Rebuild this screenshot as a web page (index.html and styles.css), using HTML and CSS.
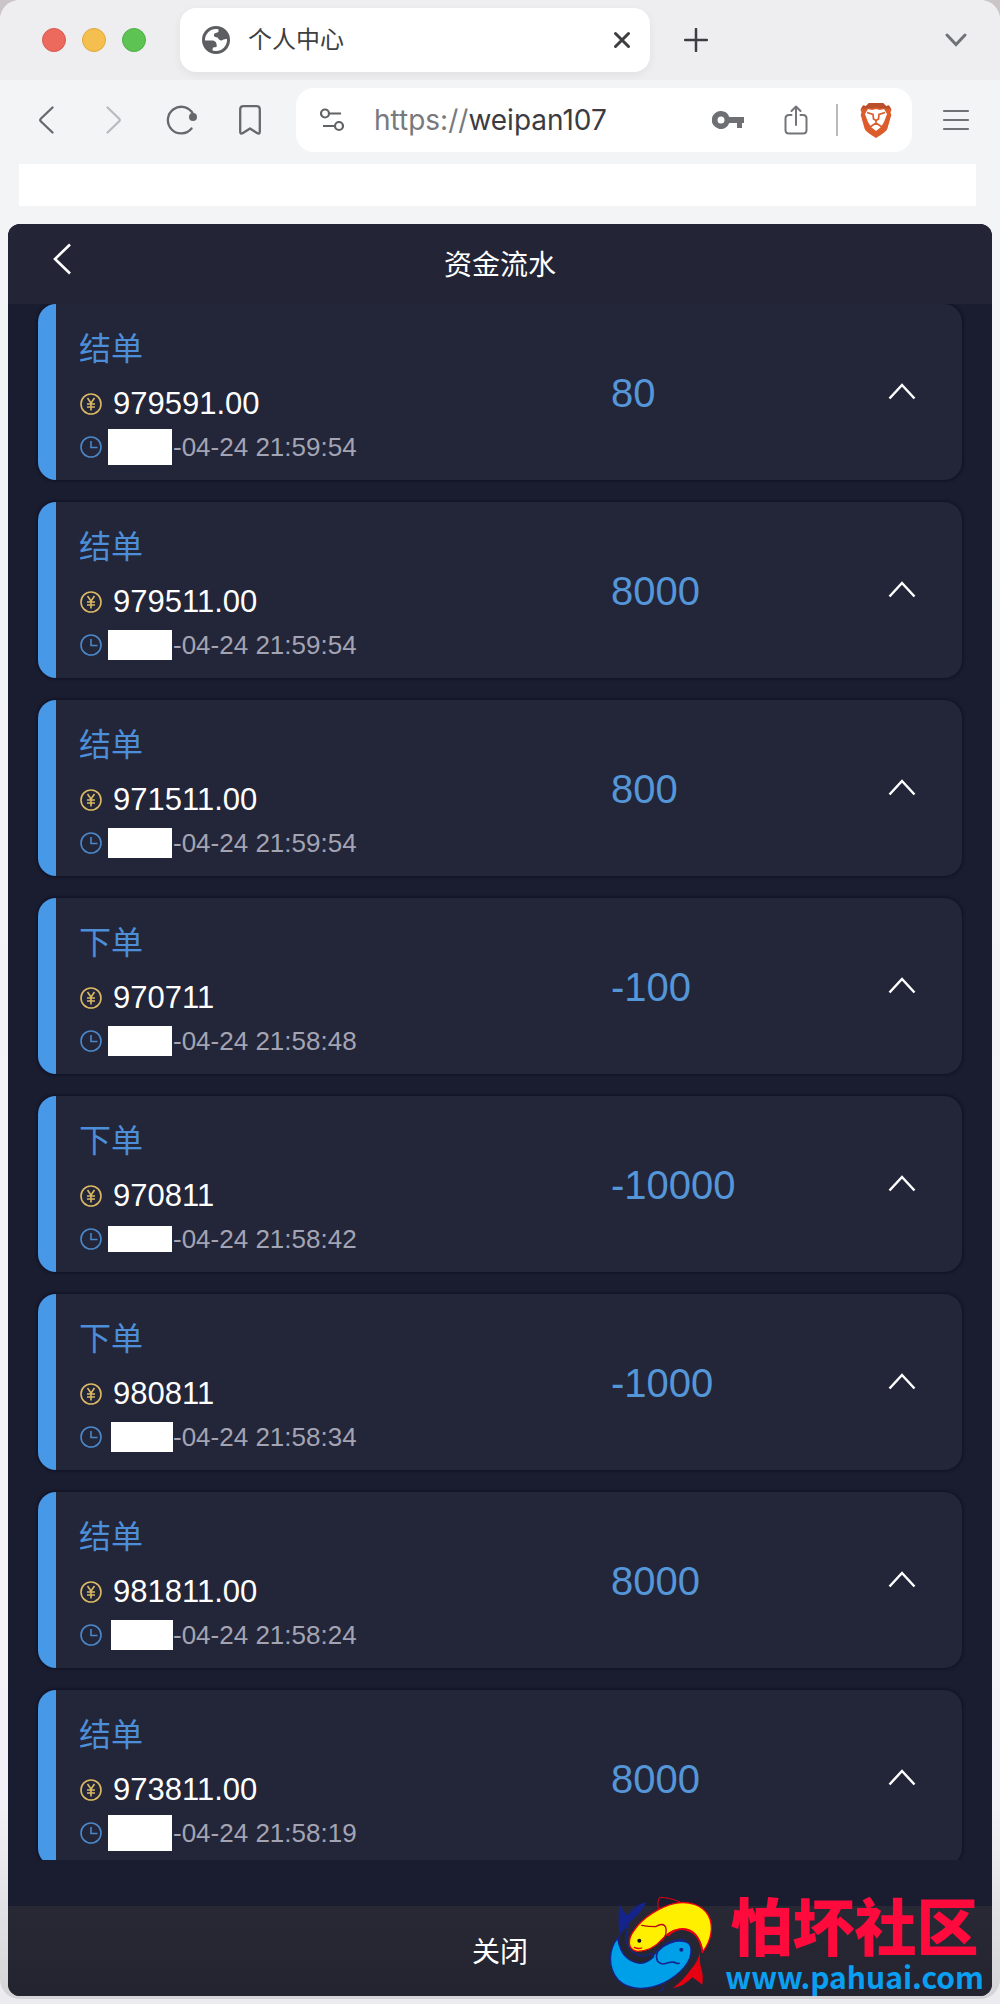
FILE: index.html
```html
<!DOCTYPE html>
<html lang="zh-CN">
<head>
<meta charset="utf-8">
<meta name="viewport" content="width=device-width, initial-scale=1">
<title>个人中心</title>
<link rel="stylesheet" href="styles.css">
</head>
<body>
<svg class="defs" aria-hidden="true">
  <symbol id="coin" viewBox="0 0 22 22"><circle cx="11" cy="11" r="10"/><path d="M7.500 5 11 10l3.500-5M7 11h8M7 14h8M11 10v7.500"/></symbol>
  <symbol id="clock" viewBox="0 0 22 22"><circle cx="11" cy="11" r="10"/><path d="M11 5v6.500h6.500"/></symbol>
  <symbol id="up" viewBox="0 0 28 18"><path d="M1.500 16.500 14 3l12.500 13.500"/></symbol>
</svg>
<div class="window">
  <header class="tabs">
    <div class="lights"><i class="light red"></i><i class="light amber"></i><i class="light green"></i></div>
    <div class="tab">
      <svg width="28" height="28" viewBox="0 0 28 28"><circle cx="14" cy="14" r="12.500" fill="#fff" stroke="#5d5e61" stroke-width="3"/><path fill="#5d5e61" d="M17 2.500q-1 1-.5 3.500l-4 1.500q-1.500 2 .5 3.500 3-.5 4 2.500 2 2 4.500 0l5-1V9l-4-5.500zM2 14.500h9q3 .5 3.500 3.500.5 1.500 0 3l-3.500.5-1 4.500-6-3z"/></svg>
      <span class="tab-title">个人中心</span>
      <button class="icon" aria-label="关闭标签页"><svg width="18" height="18" viewBox="0 0 18 18" fill="none" stroke="#3d3e41" stroke-width="3" stroke-linecap="round"><path d="m2.500 2.500 13 13M15.500 2.500l-13 13"/></svg></button>
    </div>
    <button class="icon new-tab" aria-label="新标签页"><svg width="24" height="24" viewBox="0 0 24 24" fill="none" stroke="#3d3e41" stroke-width="2.500" stroke-linecap="round"><path d="M12 1v22M1 12h22"/></svg></button>
    <button class="icon tab-menu" aria-label="标签页列表"><svg width="22" height="14" viewBox="0 0 22 14" fill="none" stroke="#707375" stroke-width="3" stroke-linecap="round"><path d="m2 2 9 9.500L20 2"/></svg></button>
  </header>
  <nav class="toolbar">
    <div class="nav-buttons">
      <button class="icon" aria-label="后退"><svg width="16" height="28" viewBox="0 0 16 28" fill="none" stroke="#66696c" stroke-width="2.300" stroke-linecap="round" stroke-linejoin="round"><path d="M14.500 1.500 3 12.500q-1.500 1.500 0 3l11.500 11"/></svg></button>
      <button class="icon" aria-label="前进"><svg width="16" height="28" viewBox="0 0 16 28" fill="none" stroke="#b9bcbe" stroke-width="2.300" stroke-linecap="round" stroke-linejoin="round"><path d="M1.500 1.500 13 12.500q1.500 1.500 0 3l-11.500 11"/></svg></button>
      <button class="icon" aria-label="重新加载"><svg width="32" height="30" viewBox="0 0 32 30" fill="none" stroke="#66696c" stroke-width="2.300" stroke-linecap="round"><path d="M27 9A13.300 13.300 0 1 0 25.500 23.500"/><circle cx="27" cy="12" r="4" fill="#66696c" stroke="none"/></svg></button>
      <button class="icon" aria-label="收藏"><svg width="22" height="30" viewBox="0 0 22 30" fill="none" stroke="#66696c" stroke-width="2.300" stroke-linejoin="round"><path d="M1.200 4.500Q1.200 1.200 4.500 1.200h13q3.300 0 3.300 3.300v22q0 3.300-2.800 1.500l-7-4.500-7 4.500q-2.800 1.800-2.800-1.500z"/></svg></button>
    </div>
    <div class="address">
      <svg width="24" height="24" viewBox="0 0 24 24" fill="none" stroke="#606366" stroke-width="2.200"><circle cx="5" cy="5.500" r="4"/><path d="M9.500 5.500H21M3 18h11.500"/><circle cx="19" cy="18" r="4"/></svg>
      <div class="url"><label for="url">https://</label><input id="url" type="text" value="weipan107"></div>
      <div class="address-actions">
        <button class="icon" aria-label="密码"><svg width="32" height="18" viewBox="0 0 32 18" fill="#6d6f72"><path fill-rule="evenodd" d="M9 0a9 9 0 1 0 8.300 12H25v5h5v-5h2V6H17.300A9 9 0 0 0 9 0zm0 5.500a3.500 3.500 0 1 1 0 7 3.500 3.500 0 0 1 0-7z"/></svg></button>
        <button class="icon" aria-label="分享"><svg width="24" height="30" viewBox="0 0 24 30" fill="none" stroke="#727477" stroke-width="2" stroke-linecap="round" stroke-linejoin="round"><path d="M7.500 10H5q-3.500 0-3.500 3.500v11.500q0 3.500 3.500 3.500h14q3.500 0 3.500-3.500V13.500q0-3.500-3.500-3.500h-2.500M12 20V2M7.500 6 12 1.500 16.500 6"/></svg></button>
        <i class="divider"></i>
        <button class="icon" aria-label="Brave 防护"><svg width="32" height="36" viewBox="0 0 32 36"><path fill="#dc5c2c" d="M9 1h14l3 3 3-.5 2.500 4-1 3 .8 2.500-4 14Q26 30 16 36 6 30 4.700 27L.7 13l.8-2.500-1-3L3 3.500 6 4z"/><path fill="#b94f2c" d="M9 1h14l3 3 3-.5 2 3.500-6-.5-9-1-9 1L1 7l2-3.500L6 4z"/><path fill="#fff" d="m5 12 3-5 4 1 4-1 4 1 4-1 3 5-3 8-3 5-5 4-5-4-3-5z"/><path fill="none" stroke="#dc5c2c" stroke-width="1.700" d="m7 10.500 6 2 .5 4.500 2.500 1.500 2.500-1.500.5-4.500 6-2M16 18v4M10 25l6-4 6 4"/></svg></button>
      </div>
    </div>
    <button class="icon" aria-label="菜单"><svg width="28" height="22" viewBox="0 0 28 22" fill="none" stroke="#707375" stroke-width="2.200" stroke-linecap="round"><path d="M2 2h24M2 11h24M2 20h24"/></svg></button>
  </nav>
  <div class="bookmarks"></div>

  <main class="app">
    <header class="app-head">
      <button class="icon back" aria-label="返回"><svg width="20" height="32" viewBox="0 0 20 32" fill="none" stroke="#fff" stroke-width="2.600"><path d="M18 1.500 3 16l15 14.500"/></svg></button>
      <h1>资金流水</h1>
    </header>
    <ul class="list">
      <li class="card"><div><h2>结单</h2><p class="amount"><svg><use href="#coin"/></svg>979591.00</p><p class="date"><svg><use href="#clock"/></svg><span class="slot"><i class="mask tall"></i></span>-04-24 21:59:54</p></div><strong>80</strong><button class="icon" aria-label="收起"><svg class="up"><use href="#up"/></svg></button></li>
      <li class="card"><div><h2>结单</h2><p class="amount"><svg><use href="#coin"/></svg>979511.00</p><p class="date"><svg><use href="#clock"/></svg><span class="slot"><i class="mask"></i></span>-04-24 21:59:54</p></div><strong>8000</strong><button class="icon" aria-label="收起"><svg class="up"><use href="#up"/></svg></button></li>
      <li class="card"><div><h2>结单</h2><p class="amount"><svg><use href="#coin"/></svg>971511.00</p><p class="date"><svg><use href="#clock"/></svg><span class="slot"><i class="mask"></i></span>-04-24 21:59:54</p></div><strong>800</strong><button class="icon" aria-label="收起"><svg class="up"><use href="#up"/></svg></button></li>
      <li class="card"><div><h2>下单</h2><p class="amount"><svg><use href="#coin"/></svg>970711</p><p class="date"><svg><use href="#clock"/></svg><span class="slot"><i class="mask"></i></span>-04-24 21:58:48</p></div><strong>-100</strong><button class="icon" aria-label="收起"><svg class="up"><use href="#up"/></svg></button></li>
      <li class="card"><div><h2>下单</h2><p class="amount"><svg><use href="#coin"/></svg>970811</p><p class="date"><svg><use href="#clock"/></svg><span class="slot"><i class="mask short"></i></span>-04-24 21:58:42</p></div><strong>-10000</strong><button class="icon" aria-label="收起"><svg class="up"><use href="#up"/></svg></button></li>
      <li class="card"><div><h2>下单</h2><p class="amount"><svg><use href="#coin"/></svg>980811</p><p class="date"><svg><use href="#clock"/></svg><span class="slot end"><i class="mask"></i></span>-04-24 21:58:34</p></div><strong>-1000</strong><button class="icon" aria-label="收起"><svg class="up"><use href="#up"/></svg></button></li>
      <li class="card"><div><h2>结单</h2><p class="amount"><svg><use href="#coin"/></svg>981811.00</p><p class="date"><svg><use href="#clock"/></svg><span class="slot end"><i class="mask"></i></span>-04-24 21:58:24</p></div><strong>8000</strong><button class="icon" aria-label="收起"><svg class="up"><use href="#up"/></svg></button></li>
      <li class="card"><div><h2>结单</h2><p class="amount"><svg><use href="#coin"/></svg>973811.00</p><p class="date"><svg><use href="#clock"/></svg><span class="slot"><i class="mask tall"></i></span>-04-24 21:58:19</p></div><strong>8000</strong><button class="icon" aria-label="收起"><svg class="up"><use href="#up"/></svg></button></li>
    </ul>
    <button class="close">关闭</button>
    <div class="brand">
      <svg width="108" height="100" viewBox="50 40 324 300" stroke-linejoin="round" stroke-linecap="round">
        <path fill="#14248a" d="M88 70q12 28 24 34 22-34 56-39-16 32-42 52-24 22-36 56-10-46-2-103z"/>
        <path fill="none" stroke="#e60012" stroke-width="3" d="M204 84q-4-24 4-34 26 0 60 13"/>
        <path fill="none" stroke="#14248a" stroke-width="4" d="M220 302q4 24-12 30"/>
        <path fill="#00a0e9" stroke="#14248a" stroke-width="4" d="M82 172C54 206 52 262 84 298c34 34 92 30 138 8 46-24 84-62 80-102-2-18-20-26-46-22-26 6-50 22-66 42-30 28-68 24-90-4-12-16-16-32-18-48z"/>
        <path fill="#23242f" stroke="#14248a" stroke-width="4" d="M84 174q8 66 64 74 22 0 42-20l-10-10q-20 14-40 4-24-10-32-38-4-16 6-48-22 12-30 38z"/>
        <path fill="none" stroke="#14248a" stroke-width="5" d="M282 178q-44-6-78 32-10 16-2 32 10 12 26 6 12-4 22-4 10 6 16 4"/>
        <path fill="#fff000" stroke="#e60012" stroke-width="4" d="M140 212c-30-6-28-38-8-64 26-38 78-70 122-80 40-8 82 4 100 36 18 34 8 78-17 110-4-40-28-70-72-68-22 2-34 14-48 28-20 24-42 38-77 38z"/>
        <path fill="none" stroke="#b80818" stroke-width="4" d="M154 134q20 4 42 4 24-14 30 2 6 18-10 40"/>
        <path fill="none" stroke="#e60012" stroke-width="5" d="M234 164q28-28 62-16 32 12 40 66"/>
        <path fill="none" stroke="#e60012" stroke-width="4" d="M132 200q12 6 22 2"/>
        <path fill="#e60012" d="M330 212q-6 30-30 56-22 32-52 54 32-4 58-32 12 8 30 22 4-28-4-52-6-20-2-48z"/>
        <circle cx="147" cy="180" r="6" fill="#111"/><circle cx="273" cy="207" r="6" fill="#14248a"/>
      </svg>
      <div class="brand-text"><b>怕坏社区</b><span>www.pahuai.com</span></div>
    </div>
  </main>
</div>
</body>
</html>
```
FILE: styles.css
```css
* { box-sizing: border-box; }
html, body { height: 100%; }
body {
  margin: 0;
  padding-bottom: 5px;
  background: linear-gradient(#cbc5c7, #ecebef);
  font-family: "Liberation Sans", "Noto Sans CJK SC", sans-serif;
}
h1, h2, p, ul { margin: 0; padding: 0; font-weight: 400; }
svg { display: block; flex: none; }
button { font: inherit; color: inherit; border: 0; background: none; padding: 0; cursor: pointer; }
.icon { display: grid; place-items: center; flex: none; }
.defs { position: absolute; width: 0; height: 0; }

.window {
  height: 100%;
  display: flex;
  flex-direction: column;
  padding-bottom: 3px;
  border-radius: 20px;
  overflow: hidden;
  background: linear-gradient(#f3f4f6 10%, #f2f2f8 90%, #d4d4d6);
}

/* Tab strip */
.tabs { display: flex; align-items: center; flex: none; height: 80px; padding: 0 33px 0 42px; background: #eeeef0; }
.lights { display: flex; gap: 16px; }
.light { width: 24px; height: 24px; border-radius: 50%; }
.red { background: #ec695e; border: 1px solid #d65a51; }
.amber { background: #f5bf4f; border: 1px solid #dfa840; }
.green { background: #5dc453; border: 1px solid #4daf45; }
.tab {
  display: flex;
  align-items: center;
  flex: 0 1 470px;
  height: 64px;
  margin-left: 34px;
  padding: 0 19px 0 22px;
  border-radius: 16px;
  background: #fff;
  box-shadow: 0 3px 10px #0000000f;
}
.tab-title { flex: 1; margin-left: 18px; font-size: 24px; line-height: 32px; color: #3d3e41; }
.new-tab { margin-left: 34px; }
.tab-menu { margin-left: auto; }

/* Toolbar */
.toolbar { display: flex; align-items: center; flex: none; height: 80px; padding: 0 30px 0 38px; background: #f3f4f6; }
.nav-buttons { display: flex; align-items: center; gap: 41px; }
.nav-buttons .icon:first-child { margin-right: 11px; }
.nav-buttons .icon:nth-child(3) { margin-left: 3px; }
.address {
  display: flex;
  align-items: center;
  flex: 1;
  min-width: 0;
  height: 64px;
  margin: 0 30px 0 35px;
  padding: 0 20px 0 24px;
  border-radius: 18px;
  background: #fff;
}
.url { display: flex; flex: 1; min-width: 0; margin-left: 30px; font: 28px/36px Inter, sans-serif; color: #77797c; }
.url input { flex: 1; min-width: 0; padding: 0; border: 0; outline: 0; background: none; font: inherit; color: #3b3c3f; }
.address-actions { display: flex; align-items: center; gap: 22px; }
.address-actions .icon:first-child { margin-right: 18px; }
.divider { width: 2px; height: 32px; margin-left: 6px; background: #b9bbbd; }
.bookmarks { flex: none; height: 42px; margin: 4px 24px 18px 19px; background: #fff; }

/* Page */
.app {
  position: relative;
  display: flex;
  flex-direction: column;
  flex: 1;
  min-height: 0;
  margin: 0 8px;
  border-radius: 12px;
  overflow: hidden;
  background: #1a1c2f;
}
.app-head { display: grid; grid-template-columns: 1fr auto 1fr; align-items: center; flex: none; height: 80px; padding: 0 44px; background: #232536; color: #fff; }
.back { justify-self: start; margin-bottom: 10px; }
.app-head h1 { padding-top: 4px; font-size: 28px; line-height: 40px; }
.list {
  display: flex;
  flex-direction: column;
  gap: 22px;
  flex: 1;
  min-height: 0;
  margin-bottom: 46px;
  padding: 0 30px;
  overflow: hidden;
  list-style: none;
}
.card {
  display: grid;
  grid-template-columns: 19fr 10fr auto;
  flex: none;
  padding: 21px 46px 13px 23px;
  border-left: 18px solid #4898e8;
  border-radius: 18px;
  background: #232538;
  box-shadow: 0 0 3px 1px #0f1124;
}
.card h2 { margin-bottom: 8px; font-size: 32px; line-height: 48px; color: #4c8fd8; }
.card p { display: flex; align-items: center; white-space: nowrap; }
.card p svg { width: 22px; height: 22px; margin-left: 1px; fill: none; stroke-width: 1.6px; }
.amount { gap: 11px; font-size: 31px; line-height: 46px; color: #fff; }
.amount svg { stroke: #dcb964; }
.date { height: 40px; font-size: 26px; line-height: 40px; color: #a3a4b3; }
.date svg { stroke: #4b88c9; }
.slot { display: flex; width: 65px; margin-left: 6px; padding-right: 1px; }
.slot.end { padding: 0 0 0 3px; }
.mask { flex: 1; height: 30px; background: #fff; }
.tall { height: 36px; }
.short { height: 26px; }
.card strong { padding: 44px 0 0 2px; font-size: 40px; line-height: 48px; font-weight: 400; color: #5596d9; }
.card .icon { align-self: start; margin-top: 57px; }
.up { width: 28px; height: 18px; fill: none; stroke: #fff; stroke-width: 2.5px; }
.close { flex: none; height: 90px; padding-bottom: 2px; background: linear-gradient(#282935, #23242f); font-size: 28px; color: #fff; }

/* Site mark over the page corner */
.brand { position: absolute; right: 8px; bottom: 0; display: flex; align-items: center; gap: 10px; }
.brand-text { display: flex; flex-direction: column; align-items: center; font-family: "Noto Sans CJK SC", sans-serif; font-weight: 700; }
.brand-text b { font-size: 62px; line-height: 64px; font-weight: 900; color: #ff0a3c; }
.brand-text span { font-size: 30px; line-height: 40px; color: #0a9ff0; }
```
